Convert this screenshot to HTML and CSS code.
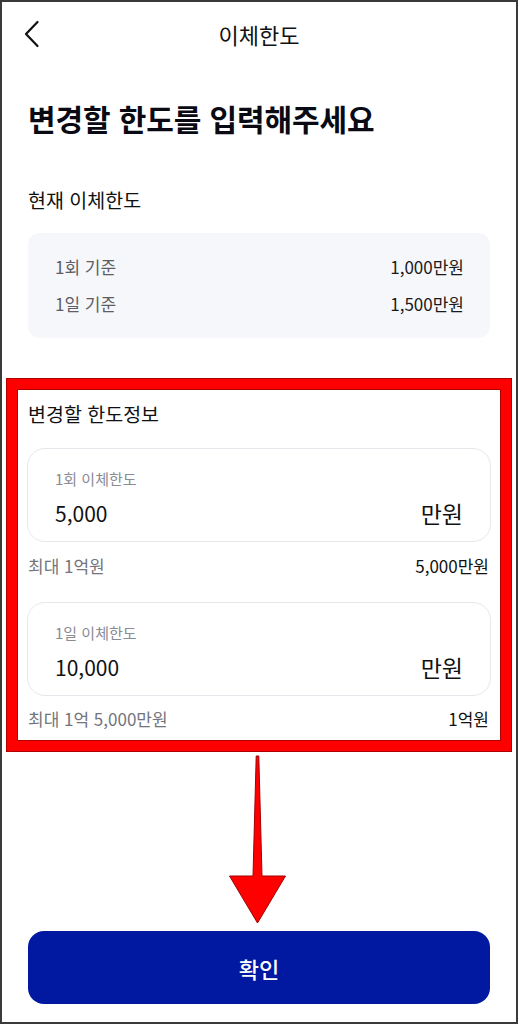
FILE: index.html
```html
<!DOCTYPE html>
<html lang="ko">
<head>
<meta charset="utf-8">
<title>이체한도</title>
<link rel="stylesheet" href="styles.css">
</head>
<body>
<div class="screen">
  <header class="topbar">
    <button class="back" aria-label="뒤로">
      <svg width="16" height="28" viewBox="0 0 16 28"><path d="M13.5 2 L2 14 L13.5 26" fill="none" stroke="#111" stroke-width="2.2" stroke-linecap="round" stroke-linejoin="round"/></svg>
    </button>
    <div class="title">이체한도</div>
    <div class="spacer"></div>
  </header>

  <h1 class="heading">변경할 한도를 입력해주세요</h1>

  <h2 class="section-title">현재 이체한도</h2>
  <div class="current">
    <div class="row"><span class="row-label">1회 기준</span><span class="row-value">1,000만원</span></div>
    <div class="row"><span class="row-label">1일 기준</span><span class="row-value">1,500만원</span></div>
  </div>

  <section class="highlight">
    <h2 class="section-title inner-title">변경할 한도정보</h2>
    <div class="field">
      <div class="field-label">1회 이체한도</div>
      <div class="field-row"><span class="field-value">5,000</span><span class="field-unit">만원</span></div>
    </div>
    <div class="hint"><span class="hint-label">최대 1억원</span><span class="hint-value">5,000만원</span></div>
    <div class="field second">
      <div class="field-label">1일 이체한도</div>
      <div class="field-row"><span class="field-value">10,000</span><span class="field-unit">만원</span></div>
    </div>
    <div class="hint last"><span class="hint-label">최대 1억 5,000만원</span><span class="hint-value">1억원</span></div>
  </section>

  <div class="arrow">
    <svg width="60" height="170" viewBox="0 0 60 170"><path d="M28.2 1 L30.8 1 L34 121 L57.5 121 L29.5 168 L1.5 121 L25 121 Z" fill="#ff0000" stroke="#a30000" stroke-width="1" stroke-linejoin="miter"/></svg>
  </div>

  <button class="confirm">확인</button>
</div>
</body>
</html>
```

FILE: styles.css
```css
* { box-sizing: border-box; margin: 0; padding: 0; }
html, body { background: #fff; }
body {
  font-family: "Noto Sans CJK KR", "Noto Sans", sans-serif;
  color: #111;
}
.screen {
  width: 518px;
  height: 1024px;
  border: 2px solid #3a3a3a;
  display: flex;
  flex-direction: column;
  overflow: hidden;
}
.topbar {
  height: 64px;
  display: grid;
  grid-template-columns: 60px 1fr 60px;
  align-items: center;
}
.back {
  border: 0;
  background: none;
  width: 60px;
  height: 64px;
  display: flex;
  align-items: center;
  padding-left: 22px;
}
.title {
  text-align: center;
  font-size: 22px;
  font-weight: 400;
  line-height: 64px;
  color: #111;
}
.heading {
  margin-top: 32px;
  padding-left: 26px;
  font-size: 30px;
  line-height: 40px;
  font-weight: 700;
  color: #0a0a14;
  letter-spacing: -0.1px;
}
.section-title {
  margin-top: 49px;
  padding-left: 26px;
  font-size: 19.5px;
  line-height: 26px;
  font-weight: 400;
  color: #111;
}
.current {
  margin: 20px 26px 0 26px;
  background: #f6f7fa;
  border-radius: 12px;
  padding: 21px 26px 21px 27px;
  display: flex;
  flex-direction: column;
  gap: 11px;
}
.row {
  display: flex;
  justify-content: space-between;
  font-size: 17px;
  line-height: 26px;
}
.row-label { color: #5d5d66; }
.row-value { color: #1a1a1a; }

.highlight {
  margin: 41px 5px 0 5px;
  border: 10px solid #ff0000;
  box-shadow: inset 0 0 0 1px #b00000, 0 0 0 1px #b00000;
  padding: 12px 9px 10px 9px;
}
.inner-title {
  margin-top: 0;
  padding-left: 2px;
}
.field {
  margin-top: 21px;
  margin-left: 1px;
  margin-right: 1px;
  border: 1px solid #e6e7ec;
  border-radius: 18px;
  padding: 20px 27px 14px 27px;
}
.field.second { margin-top: 24px; }
.field-label {
  font-size: 15px;
  line-height: 20px;
  color: #8a8b93;
}
.field-row {
  margin-top: 10px;
  display: flex;
  justify-content: space-between;
  align-items: center;
  font-size: 21px;
  line-height: 28px;
  color: #111;
}
.field-unit { font-size: 23px; }
.hint {
  margin-top: 12px;
  display: flex;
  justify-content: space-between;
  font-size: 17px;
  line-height: 24px;
  padding: 0 3px 0 2px;
}
.hint.last { margin-top: 11px; }
.hint-label { color: #74757c; }
.hint-value { color: #111; }

.arrow {
  margin-top: 4px;
  height: 172px;
  display: flex;
  justify-content: center;
}
.arrow svg { display: block; margin-left: -2px; }
.confirm {
  margin: 4px 26px 0 26px;
  height: 73px;
  border: 0;
  border-radius: 16px;
  background: #0019a0;
  color: #fff;
  font-family: "Noto Sans CJK KR", "Noto Sans", sans-serif;
  font-size: 22px;
  font-weight: 500;
}
```
